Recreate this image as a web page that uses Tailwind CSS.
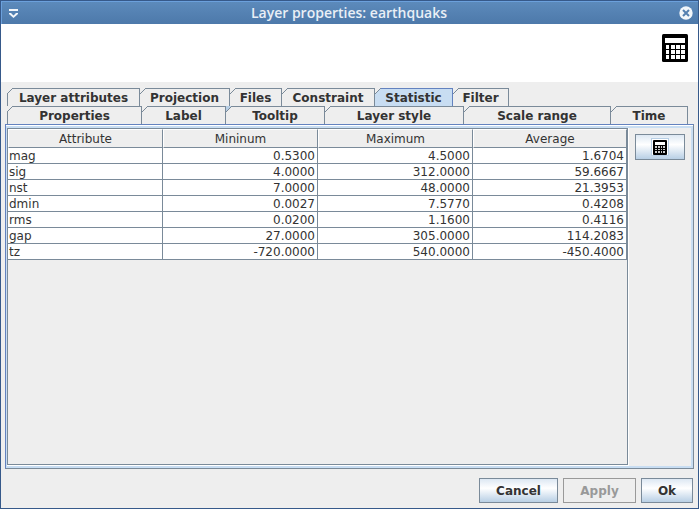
<!DOCTYPE html>
<html lang="en">
<head>
<meta charset="utf-8">
<meta name="viewport" content="width=device-width, initial-scale=1">
<title>Layer properties: earthquaks</title>
<script src="https://cdn.jsdelivr.net/npm/@tailwindcss/browser@4"></script>
</head>
<body class="flex min-h-screen flex-col border border-[#36598a] bg-[#eeeeee] font-['DejaVu_Sans',sans-serif] text-[12px] leading-[14px] text-[#333333]">

<svg class="hidden" aria-hidden="true">
  <symbol id="chamfer" viewBox="0 0 6 6">
    <path d="M0 0H6L0 6Z" fill="#eeeeee"/>
    <path d="M0 6L6 0" fill="none" stroke="#7a8a99" stroke-width="1"/>
  </symbol>
  <symbol id="calculator" viewBox="0 0 26 28">
    <rect width="26" height="28" rx="1.5" fill="#000"/>
    <path fill="#fff" d="M3 4h20v5H3zM4 11h3v4H4zM9 11h4v4H9zM14 11h4v4h-4zM19 11h4v4h-4zM4 16h3v4H4zM9 16h4v4H9zM14 16h4v4h-4zM19 16h4v4h-4zM4 21h3v4H4zM9 21h4v4H9zM14 21h4v4h-4zM19 21h4v4h-4z"/>
  </symbol>
  <symbol id="calculator-small" viewBox="0 0 14 15">
    <rect width="14" height="15" rx="1" fill="#000"/>
    <path fill="#fff" d="M2 2h10v3H2z"/>
    <path fill="#ccc" d="M2 6h2v2H2zM5 6h2v2H5zM8 6h1v2H8zM10 6h2v2h-2zM2 9h2v1H2zM5 9h2v1H5zM8 9h1v1H8zM10 9h2v1h-2zM2 11h2v2H2zM5 11h2v2H5zM8 11h1v2H8zM10 11h2v2h-2z"/>
  </symbol>
</svg>

<header class="flex h-[23px] items-center border-t border-l border-[#6ba0dc] bg-linear-to-b from-[#5c8abb] to-[#4d79aa] pr-[5px] pl-[7px]">
  <button aria-label="Window menu" class="flex h-4 w-[10px] items-center">
    <svg width="10" height="9" viewBox="0 0 10 9" fill="#f2f6fa"><path d="M0 0h9v2H0zM0 4h2l2.500 2.500L7 4h2v1L4.500 9 0 5z"/></svg>
  </button>
  <h1 class="grow text-center font-['Open_Sans','Noto_Sans',sans-serif] text-[14px] leading-4 font-semibold text-[#e9eff6]">Layer properties: earthquaks</h1>
  <button aria-label="Close" class="h-[14px] w-[14px]">
    <svg width="14" height="14" viewBox="0 0 14 14"><circle cx="7" cy="7" r="6.700" fill="#f2f6fa"/><path d="M4 4l6 6M10 4l-6 6" stroke="#5580b0" stroke-width="2"/></svg>
  </button>
</header>

<div class="flex h-[58px] items-start justify-end bg-white pt-[10px] pr-[10px]">
  <svg width="26" height="28" role="img" aria-label="Calculator"><use href="#calculator"/></svg>
</div>

<main class="flex grow flex-col px-1 pt-[6px]">
  <nav role="tablist" aria-label="Layer property pages" class="pr-[6px] pl-[2px] font-bold">
    <div class="flex">
      <button role="tab" class="relative h-[18px] w-[133px] border-t border-r border-l border-[#7a8a99] pt-px"><svg class="absolute -top-px -left-px" width="6" height="6"><use href="#chamfer"/></svg>Layer attributes</button>
      <button role="tab" class="relative h-[18px] w-[90px] border-t border-r border-[#7a8a99] pt-px"><svg class="absolute -top-px left-0" width="6" height="6"><use href="#chamfer"/></svg>Projection</button>
      <button role="tab" class="relative h-[18px] w-[52px] border-t border-r border-[#7a8a99] pt-px"><svg class="absolute -top-px left-0" width="6" height="6"><use href="#chamfer"/></svg>Files</button>
      <button role="tab" class="relative h-[18px] w-[93px] border-t border-r border-[#7a8a99] pt-px"><svg class="absolute -top-px left-0" width="6" height="6"><use href="#chamfer"/></svg>Constraint</button>
      <button role="tab" aria-selected="true" class="relative h-[18px] w-[78px] border-t border-r border-[#6382bf] bg-[#c8ddf2] pt-px"><svg class="absolute -top-px left-0" width="6" height="6"><use href="#chamfer"/></svg>Statistic</button>
      <button role="tab" class="relative h-[18px] w-[56px] border-t border-r border-[#7a8a99] pt-px"><svg class="absolute -top-px left-0" width="6" height="6"><use href="#chamfer"/></svg>Filter</button>
    </div>
    <div class="flex">
      <button role="tab" class="relative h-[18px] grow basis-[135px] border-t border-r border-l border-[#7a8a99] pt-px"><svg class="absolute -top-px -left-px" width="6" height="6"><use href="#chamfer"/></svg>Properties</button>
      <button role="tab" class="relative h-[18px] grow basis-[84px] border-t border-r border-[#7a8a99] pt-px"><svg class="absolute -top-px left-0" width="6" height="6"><use href="#chamfer"/></svg>Label</button>
      <button role="tab" class="relative h-[18px] grow basis-[99px] border-t border-r border-[#7a8a99] pt-px"><svg class="absolute -top-px left-0" width="6" height="6"><path d="M0 0H6L0 6Z" fill="#b8cfe5"/><path d="M0 6L6 0" stroke="#7a8a99"/></svg>Tooltip</button>
      <button role="tab" class="relative h-[18px] grow basis-[139px] border-t border-r border-[#7a8a99] pt-px"><svg class="absolute -top-px left-0" width="6" height="6"><use href="#chamfer"/></svg>Layer style</button>
      <button role="tab" class="relative h-[18px] grow basis-[147px] border-t border-r border-[#7a8a99] pt-px"><svg class="absolute -top-px left-0" width="6" height="6"><use href="#chamfer"/></svg>Scale range</button>
      <button role="tab" class="relative h-[18px] grow basis-[77px] border-t border-r border-[#7a8a99] pt-px"><svg class="absolute -top-px left-0" width="6" height="6"><use href="#chamfer"/></svg>Time</button>
    </div>
  </nav>

  <section role="tabpanel" aria-label="Statistic" class="flex grow flex-col border border-t-[#6382bf] border-r-[#7a8a99] border-b-[#7a8a99] border-l-[#6382bf]">
    <div class="flex grow border-t border-white">
      <div class="flex grow border-t-2 border-r-2 border-b-2 border-l border-[#c8ddf2]">
        <div class="flex grow border-r border-b border-white">
          <div class="grow border border-[#7a8a99]">
            <table class="w-full table-fixed border-separate border-spacing-0">
              <colgroup><col class="w-[155px]"><col class="w-[155px]"><col class="w-[155px]"><col></colgroup>
              <thead>
                <tr class="h-[19px]">
                  <th class="border-t border-r border-b border-l border-t-white border-r-[#7a8a99] border-b-[#7a8a99] border-l-white p-0 pt-px font-normal">Attribute</th>
                  <th class="border-t border-r border-b border-l border-t-white border-r-[#7a8a99] border-b-[#7a8a99] border-l-white p-0 pt-px font-normal">Mininum</th>
                  <th class="border-t border-r border-b border-l border-t-white border-r-[#7a8a99] border-b-[#7a8a99] border-l-white p-0 pt-px font-normal">Maximum</th>
                  <th class="border-t border-r border-b border-l border-t-white border-r-[#7a8a99] border-b-[#7a8a99] border-l-white p-0 pt-px font-normal">Average</th>
                </tr>
              </thead>
              <tbody class="bg-white text-right [&_td]:border-r [&_td]:border-b [&_td]:border-[#7a8a99] [&_td]:pt-px [&_td]:pr-[2px] [&_td]:pb-0 [&_td]:pl-px [&_td:first-child]:text-left">
                <tr><td>mag</td><td>0.5300</td><td>4.5000</td><td>1.6704</td></tr>
                <tr><td>sig</td><td>4.0000</td><td>312.0000</td><td>59.6667</td></tr>
                <tr><td>nst</td><td>7.0000</td><td>48.0000</td><td>21.3953</td></tr>
                <tr><td>dmin</td><td>0.0027</td><td>7.5770</td><td>0.4208</td></tr>
                <tr><td>rms</td><td>0.0200</td><td>1.1600</td><td>0.4116</td></tr>
                <tr><td>gap</td><td>27.0000</td><td>305.0000</td><td>114.2083</td></tr>
                <tr><td>tz</td><td>-720.0000</td><td>540.0000</td><td>-450.4000</td></tr>
              </tbody>
            </table>
          </div>
        </div>
        <aside class="w-[62px] shrink-0 px-[6px] pt-[6px]">
          <button aria-label="Calculate statistics" class="flex h-[26px] w-full items-center justify-center border border-[#7a8a99] bg-linear-to-b from-[#dde8f3] via-white via-40% to-[#b8cfe5]">
            <span class="flex h-[18px] w-[18px] items-center justify-center border border-[#b8cfe5] bg-white">
              <svg width="14" height="15"><use href="#calculator-small"/></svg>
            </span>
          </button>
        </aside>
      </div>
    </div>
  </section>
</main>

<footer class="flex justify-end gap-[5px] px-[5px] pt-[9px] pb-[5px] font-bold">
  <button class="h-[25px] w-[79px] border border-[#7a8a99] bg-linear-to-b from-[#dde8f3] via-white via-40% to-[#b8cfe5] pt-px">Cancel</button>
  <button disabled class="h-[25px] w-[73px] border border-[#999999] pt-px text-[#999999]">Apply</button>
  <button class="h-[25px] w-[52px] border border-[#7a8a99] bg-linear-to-b from-[#dde8f3] via-white via-40% to-[#b8cfe5] pt-px">Ok</button>
</footer>
</body>
</html>
